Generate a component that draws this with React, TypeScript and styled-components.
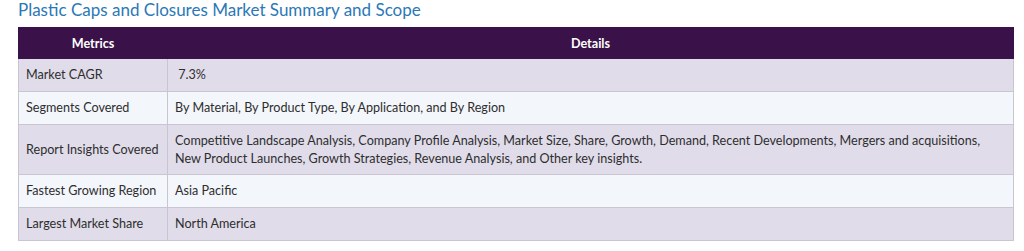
import styled, { createGlobalStyle } from "styled-components";

const GlobalStyle = createGlobalStyle`
  body {
    margin: 0;
    background: #ffffff;
    font-family: Lato, "Open Sans", sans-serif;
  }
`;

const Page = styled.div`
  padding: 0 10px 0 18px;
`;

const Title = styled.h2`
  margin: 0;
  height: 27px;
  font-size: 17px;
  font-weight: 400;
  line-height: 20px;
  color: #2b78b6;
`;

const Table = styled.table`
  width: 996px;
  border-collapse: collapse;
  font-size: 12.6px;
  color: #2e2e2e;
`;

const HeadCell = styled.th`
  height: 30px;
  padding: 0 8px;
  background: #3a1249;
  color: #ffffff;
  font-weight: 700;
  font-size: 12.6px;
  text-align: center;
  border: 1px solid #3a1249;
`;

const Row = styled.tr<{ $shade: boolean }>`
  background: ${props => (props.$shade ? "#e0dcea" : "#f3f6fb")};
`;

const Cell = styled.td<{ $tall?: boolean; $metric?: boolean }>`
  height: ${props => (props.$tall ? "49px" : "32px")};
  padding: 0 7px;
  border: 1px solid #c9c6d2;
  line-height: 18px;
  vertical-align: middle;
  white-space: ${props => (props.$metric ? "nowrap" : "normal")};
`;

const rows = [
  { metric: "Market CAGR", detail: "\u00a07.3%" },
  { metric: "Segments Covered", detail: "By Material, By Product Type, By Application, and By Region" },
  {
    metric: "Report Insights Covered",
    detail:
      "Competitive Landscape Analysis, Company Profile Analysis, Market Size, Share, Growth, Demand, Recent Developments, Mergers and acquisitions, New Product Launches, Growth Strategies, Revenue Analysis, and Other key insights.",
    tall: true,
  },
  { metric: "Fastest Growing Region", detail: "Asia Pacific" },
  { metric: "Largest Market Share", detail: "North America" },
];

const App = () => {
  return (
    <>
      <GlobalStyle />
      <Page>
        <Title>Plastic Caps and Closures Market Summary and Scope</Title>
        <Table>
          <colgroup>
            <col style={{ width: "149px" }} />
            <col />
          </colgroup>
          <thead>
            <tr>
              <HeadCell>Metrics</HeadCell>
              <HeadCell>Details</HeadCell>
            </tr>
          </thead>
          <tbody>
            {rows.map((r, i) => (
              <Row key={r.metric} $shade={i % 2 === 0}>
                <Cell $tall={r.tall} $metric>{r.metric}</Cell>
                <Cell $tall={r.tall}>{r.detail}</Cell>
              </Row>
            ))}
          </tbody>
        </Table>
      </Page>
    </>
  );
};

export default App;
